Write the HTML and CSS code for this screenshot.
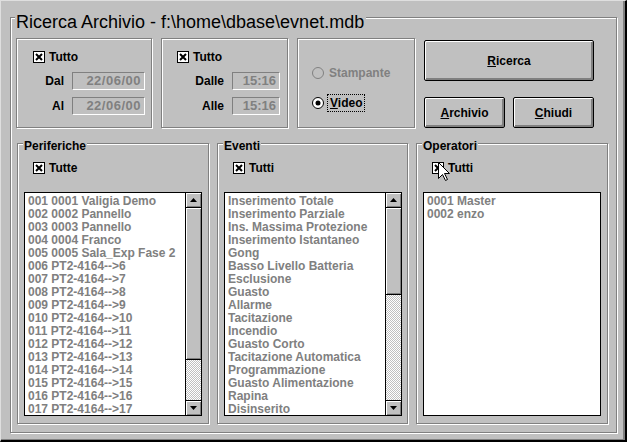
FILE: index.html
```html
<!DOCTYPE html>
<html>
<head>
<meta charset="utf-8">
<link rel="stylesheet" href="styles.css">
</head>
<body>
<div class="window">
  <div class="etched main">
    <div class="main-title">Ricerca Archivio - f:\home\dbase\evnet.mdb</div>
    <div class="top-row">
      <div class="etched box g1">
        <div class="check-row">
          <svg class="chk" width="12" height="12" viewBox="0 0 12 12"><rect x="0.5" y="0.5" width="11" height="11" fill="#fff" stroke="#000"/><path d="M3 3 L9 9 M9 3 L3 9" stroke="#000" stroke-width="2"/></svg>
          <span>Tutto</span>
        </div>
        <div class="field-grid fg1">
          <span class="lbl">Dal</span><span class="field f1">22/06/00</span>
          <span class="lbl">Al</span><span class="field f1">22/06/00</span>
        </div>
      </div>
      <div class="etched box g2">
        <div class="check-row">
          <svg class="chk" width="12" height="12" viewBox="0 0 12 12"><rect x="0.5" y="0.5" width="11" height="11" fill="#fff" stroke="#000"/><path d="M3 3 L9 9 M9 3 L3 9" stroke="#000" stroke-width="2"/></svg>
          <span>Tutto</span>
        </div>
        <div class="field-grid fg2">
          <span class="lbl">Dalle</span><span class="field f2">15:16</span>
          <span class="lbl">Alle</span><span class="field f2">15:16</span>
        </div>
      </div>
      <div class="etched box g3">
        <div class="radio-row disabled">
          <svg width="12" height="12" viewBox="0 0 12 12"><circle cx="6" cy="6" r="5.5" fill="none" stroke="#808080"/></svg>
          <span>Stampante</span>
        </div>
        <div class="radio-row">
          <svg width="12" height="12" viewBox="0 0 12 12"><circle cx="6" cy="6" r="5.5" fill="#fff" stroke="#000"/><circle cx="6" cy="6" r="2.5" fill="#000"/></svg>
          <span class="focus"><u>V</u>ideo</span>
        </div>
      </div>
      <div class="buttons">
        <div class="btn btn-big"><span><u>R</u>icerca</span></div>
        <div class="btn-row">
          <div class="btn btn-small"><span><u>A</u>rchivio</span></div>
          <div class="btn btn-small"><span><u>C</u>hiudi</span></div>
        </div>
      </div>
    </div>
    <div class="bottom-row">
      <div class="etched sel s1">
        <div class="sel-title">Periferiche</div>
        <div class="check-row cr">
          <svg class="chk" width="12" height="12" viewBox="0 0 12 12"><rect x="0.5" y="0.5" width="11" height="11" fill="#fff" stroke="#000"/><path d="M3 3 L9 9 M9 3 L3 9" stroke="#000" stroke-width="2"/></svg>
          <span>Tutte</span>
        </div>
        <div class="list">
          <div class="items">
            <div>001 0001 Valigia Demo</div>
            <div>002 0002 Pannello</div>
            <div>003 0003 Pannello</div>
            <div>004 0004 Franco</div>
            <div>005 0005 Sala_Exp Fase 2</div>
            <div>006 PT2-4164--&gt;6</div>
            <div>007 PT2-4164--&gt;7</div>
            <div>008 PT2-4164--&gt;8</div>
            <div>009 PT2-4164--&gt;9</div>
            <div>010 PT2-4164--&gt;10</div>
            <div>011 PT2-4164--&gt;11</div>
            <div>012 PT2-4164--&gt;12</div>
            <div>013 PT2-4164--&gt;13</div>
            <div>014 PT2-4164--&gt;14</div>
            <div>015 PT2-4164--&gt;15</div>
            <div>016 PT2-4164--&gt;16</div>
            <div>017 PT2-4164--&gt;17</div>
          </div>
          <div class="scroll">
            <div class="sbtn"><svg width="7" height="4" viewBox="0 0 7 4"><path d="M3.5 0 L7 4 L0 4 Z" fill="#000"/></svg></div>
            <div class="thumb" style="height:152px"></div>
            <div class="track"></div>
            <div class="sbtn"><svg width="7" height="4" viewBox="0 0 7 4"><path d="M0 0 L7 0 L3.5 4 Z" fill="#000"/></svg></div>
          </div>
        </div>
      </div>
      <div class="etched sel s2">
        <div class="sel-title">Eventi</div>
        <div class="check-row cr">
          <svg class="chk" width="12" height="12" viewBox="0 0 12 12"><rect x="0.5" y="0.5" width="11" height="11" fill="#fff" stroke="#000"/><path d="M3 3 L9 9 M9 3 L3 9" stroke="#000" stroke-width="2"/></svg>
          <span>Tutti</span>
        </div>
        <div class="list">
          <div class="items">
            <div>Inserimento Totale</div>
            <div>Inserimento Parziale</div>
            <div>Ins. Massima Protezione</div>
            <div>Inserimento Istantaneo</div>
            <div>Gong</div>
            <div>Basso Livello Batteria</div>
            <div>Esclusione</div>
            <div>Guasto</div>
            <div>Allarme</div>
            <div>Tacitazione</div>
            <div>Incendio</div>
            <div>Guasto Corto</div>
            <div>Tacitazione Automatica</div>
            <div>Programmazione</div>
            <div>Guasto Alimentazione</div>
            <div>Rapina</div>
            <div>Disinserito</div>
          </div>
          <div class="scroll">
            <div class="sbtn"><svg width="7" height="4" viewBox="0 0 7 4"><path d="M3.5 0 L7 4 L0 4 Z" fill="#000"/></svg></div>
            <div class="thumb" style="height:87px"></div>
            <div class="track"></div>
            <div class="sbtn"><svg width="7" height="4" viewBox="0 0 7 4"><path d="M0 0 L7 0 L3.5 4 Z" fill="#000"/></svg></div>
          </div>
        </div>
      </div>
      <div class="etched sel s3">
        <div class="sel-title">Operatori</div>
        <div class="check-row cr">
          <svg class="chk" width="12" height="12" viewBox="0 0 12 12"><rect x="0.5" y="0.5" width="11" height="11" fill="#fff" stroke="#000"/><path d="M3 3 L9 9 M9 3 L3 9" stroke="#000" stroke-width="2"/></svg>
          <span>Tutti</span>
        </div>
        <div class="list">
          <div class="items">
            <div>0001 Master</div>
            <div>0002 enzo</div>
          </div>
        </div>
      </div>
    </div>
  </div>
  <svg class="cursor" width="13" height="20" viewBox="0 0 13 20"><path d="M0.5 0.5 L0.5 16.5 L4.5 12.5 L7.5 18.5 L9.5 17.5 L6.5 11.5 L11.5 11.5 Z" fill="#fff" stroke="#000" stroke-linejoin="miter"/></svg>
</div>
</body>
</html>
```

FILE: styles.css
```css
* { box-sizing: border-box; }

body {
  margin: 0;
  background: #c0c0c0;
  font-family: "Liberation Sans", Arial, sans-serif;
  font-size: 12px;
  color: #000;
}

.window {
  position: relative;
  width: 627px;
  height: 442px;
  background: #c0c0c0;
  border-top: 1px solid #dfdfdf;
  border-left: 1px solid #dfdfdf;
  border-right: 2px solid #000;
  border-bottom: 2px solid #000;
  box-shadow: inset -2px -1px 0 #808080;
  padding: 16px 8px 7px 9px;
  display: flex;
}

.etched {
  border: 1px solid #808080;
  box-shadow: inset 1px 1px 0 #fff, 1px 1px 0 #fff;
}

.main {
  flex: 1;
  display: flex;
  flex-direction: column;
}

.main-title {
  align-self: flex-start;
  font-size: 18px;
  line-height: 20px;
  margin: -6px 0 0 4px;
  padding: 0 2px 0 1px;
  background: #c0c0c0;
  white-space: nowrap;
}

.top-row {
  display: flex;
  gap: 9px;
  margin: 6px 0 0 5px;
  height: 90px;
}

.box { flex: none; }
.g1 { width: 136px; padding: 12px 0 0 16px; }
.g2 { width: 127px; padding: 12px 0 0 15px; }
.g3 { width: 118px; padding: 27px 0 0 14px; }

.check-row {
  display: flex;
  align-items: center;
  gap: 4px;
  height: 12px;
  font-weight: bold;
  line-height: 14px;
}
.chk { flex: none; display: block; }

.field-grid {
  display: grid;
  row-gap: 7px;
  column-gap: 8px;
  align-items: center;
  margin-top: 9px;
  font-weight: bold;
}
.fg1 { grid-template-columns: 31px 73px; }
.fg2 { grid-template-columns: 47px 48px; }
.lbl { text-align: right; line-height: 14px; }

.field {
  height: 18px;
  border-top: 1px solid #808080;
  border-left: 1px solid #808080;
  border-right: 1px solid #fff;
  border-bottom: 1px solid #fff;
  color: #808080;
  text-align: right;
  font-size: 13px;
  line-height: 16px;
  padding-right: 3px;
}
.f1 { letter-spacing: 0.5px; }

.radio-row {
  display: flex;
  align-items: center;
  gap: 5px;
  height: 14px;
  font-weight: bold;
  line-height: 14px;
}
.radio-row svg { display: block; flex: none; }
.radio-row + .radio-row { margin-top: 16px; }
.radio-row.disabled { color: #808080; }
.focus {
  outline: 1px dotted #000;
  outline-offset: 1px;
  padding: 0 1px;
}

.buttons {
  width: 170px;
  display: flex;
  flex-direction: column;
  padding-top: 2px;
}
.btn {
  display: flex;
  align-items: center;
  justify-content: center;
  background: #c0c0c0;
  border: 1px solid #000;
  border-radius: 2px;
  box-shadow: inset 1px 1px 0 #fff, inset -2px -2px 0 #808080;
  font-weight: bold;
  line-height: 14px;
}
.btn-big { height: 41px; }
.btn-row { display: flex; gap: 8px; margin-top: 16px; }
.btn-small { width: 81px; height: 31px; }

.bottom-row {
  display: flex;
  gap: 8px;
  margin: 15px 0 0 6px;
  height: 281px;
}
.sel {
  flex: none;
  display: flex;
  flex-direction: column;
  padding-left: 6px;
}
.s1 { width: 192px; }
.s2 { width: 191px; }
.s3 { width: 192px; }

.sel-title {
  align-self: flex-start;
  margin: -5px 0 0 -1px;
  padding: 0 1px;
  background: #c0c0c0;
  font-weight: bold;
  line-height: 14px;
}
.cr { margin: 9px 0 0 9px; }

.list {
  margin-top: 18px;
  width: 178px;
  height: 224px;
  border: 1px solid #000;
  background: #fff;
  display: flex;
}
.items {
  flex: 1;
  overflow: hidden;
  padding: 2px 0 0 3px;
  font-weight: bold;
  line-height: 13px;
  color: #808080;
  white-space: nowrap;
}
.scroll {
  width: 16px;
  flex: none;
  display: flex;
  flex-direction: column;
  border-left: 1px solid #000;
}
.sbtn {
  height: 15px;
  flex: none;
  display: flex;
  align-items: center;
  justify-content: center;
  background: #c0c0c0;
  box-shadow: inset 1px 1px 0 #fff, inset -1px -1px 0 #808080;
  border-bottom: 1px solid #000;
}
.sbtn:last-child { border-bottom: none; border-top: 1px solid #000; }
.sbtn svg { display: block; }
.thumb {
  flex: none;
  background: #c0c0c0;
  box-shadow: inset 1px 1px 0 #fff, inset -1px -1px 0 #808080;
  border-bottom: 1px solid #000;
}
.track {
  flex: 1;
  background: repeating-conic-gradient(#c0c0c0 0 25%, #fff 0 50%) 0 0 / 2px 2px;
}

.cursor {
  position: absolute;
  left: 437px;
  top: 161px;
}
```
